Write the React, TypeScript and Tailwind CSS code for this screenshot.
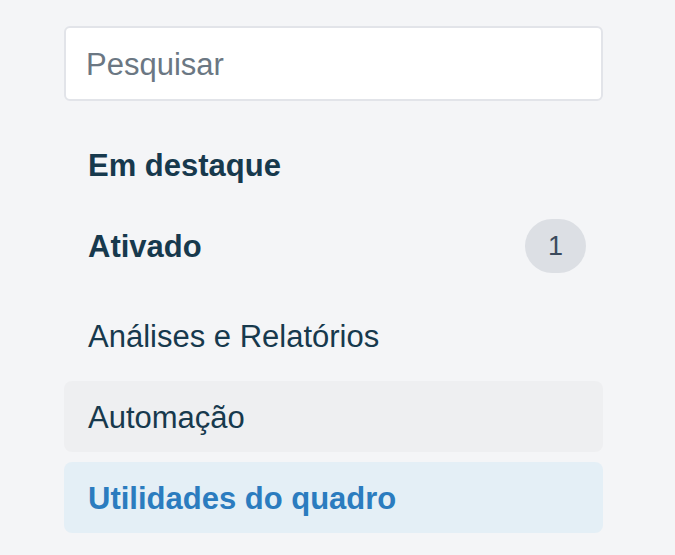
import React from "react";

export default function App() {
  const font = { fontFamily: '"Liberation Sans", Arial, Helvetica, sans-serif' };
  return (
    <div className="min-h-[555px] w-full bg-[#f4f5f7]" style={font}>
      <div className="ml-[64px] w-[539px] pt-[26px]">
        <div className="flex h-[75px] items-center rounded-[6px] border-2 border-[#e2e4e9] bg-white pl-[20px] pt-[3px]">
          <span className="text-[31px] text-[#6b7783]">Pesquisar</span>
        </div>
        <div className="mt-[28px] flex flex-col">
          <div className="flex h-[71px] items-center rounded-[8px] px-[24px] pt-[3px]">
            <span className="text-[31px] font-bold text-[#17394d]">Em destaque</span>
          </div>
          <div className="mt-[10px] flex h-[71px] items-center justify-between rounded-[8px] pl-[24px] pr-[17px]">
            <span className="pt-[3px] text-[31px] font-bold text-[#17394d]">Ativado</span>
            <span className="flex h-[54px] w-[61px] items-center justify-center rounded-full bg-[#dcdfe4] pt-[2px] text-[27px] text-[#3b4a5c]">
              1
            </span>
          </div>
          <div className="mt-[19px] flex h-[71px] items-center rounded-[8px] px-[24px] pt-[3px]">
            <span className="text-[31px] text-[#17394d]">Análises e Relatórios</span>
          </div>
          <div className="mt-[10px] flex h-[71px] items-center rounded-[8px] bg-[#eeeff1] px-[24px] pt-[3px]">
            <span className="text-[31px] text-[#17394d]">Automação</span>
          </div>
          <div className="mt-[10px] flex h-[71px] items-center rounded-[8px] bg-[#e4eff6] px-[24px] pt-[3px]">
            <span className="text-[31px] font-bold text-[#2b7cbf]">Utilidades do quadro</span>
          </div>
        </div>
      </div>
    </div>
  );
}
